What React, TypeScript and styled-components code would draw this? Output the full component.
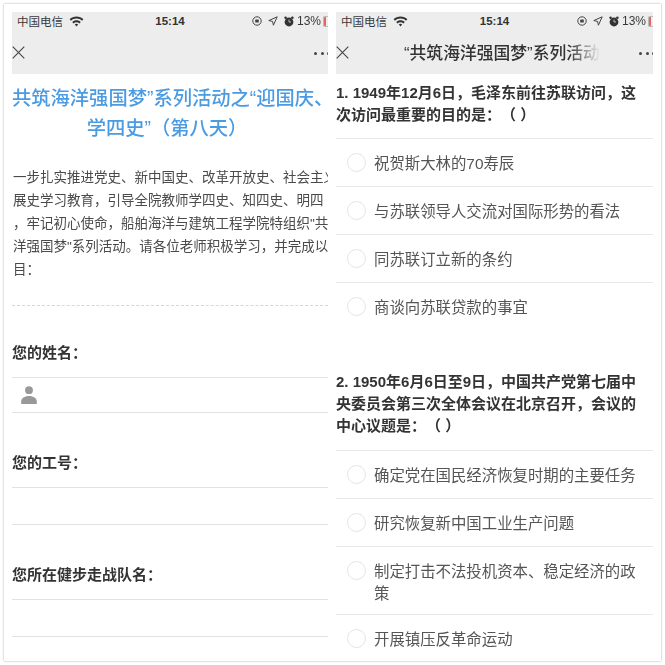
import React from 'react';
import styled, { createGlobalStyle } from 'styled-components';

const GlobalStyle = createGlobalStyle`
  html, body {
    margin: 0;
    padding: 0;
    background: #fff;
  }
  body {
    font-family: "Liberation Sans", "Noto Sans CJK SC", sans-serif;
    color: #333;
    text-spacing-trim: space-all;
  }
`;

const Page = styled.div`
  width: 665px;
  height: 665px;
  padding: 4px;
  box-sizing: border-box;
`;

const Card = styled.div`
  height: 657px;
  box-sizing: border-box;
  padding: 8px;
  display: grid;
  grid-template-columns: 316px 317px;
  gap: 8px;
  background: #fff;
  box-shadow: 0 0 2px rgba(0, 0, 0, 0.35);
  filter: blur(0.45px);
`;

const Phone = styled.div`
  overflow: hidden;
  min-width: 0;
  display: flex;
  flex-direction: column;
`;

const TopBar = styled.div`
  flex: none;
  height: 62px;
  background: #ededed;
  display: flex;
  flex-direction: column;
`;

const StatusRow = styled.div`
  height: 18px;
  display: grid;
  grid-template-columns: 1fr auto 1fr;
  align-items: center;
  font-size: 11.5px;
  color: #3a3a3a;
`;

const Carrier = styled.div`
  display: flex;
  align-items: center;
  gap: 6px;
  padding-left: 5px;
`;

const Clock = styled.div`
  font-weight: 700;
  font-size: 11.5px;
  color: #333;
`;

const StatusRight = styled.div`
  display: flex;
  align-items: center;
  justify-content: flex-end;
  gap: 6px;
`;

const Percent = styled.span`
  font-size: 12px;
  margin-left: -3px;
`;

const BatteryStub = styled.span`
  width: 5px;
  height: 11px;
  margin-left: -4px;
  border-radius: 2px 0 0 2px;
  border: 1px solid #bbb;
  border-right: none;
  box-sizing: border-box;
  background: linear-gradient(90deg, #e4675f 0 50%, transparent 50%);
`;

const NavRow = styled.div`
  height: 44px;
  display: flex;
  align-items: center;
  justify-content: space-between;
  position: relative;
`;

const NavTitle = styled.div`
  position: absolute;
  left: 68px;
  width: 196px;
  overflow: hidden;
  white-space: nowrap;
  font-size: 16.8px;
  font-weight: 500;
  color: #333;
  -webkit-mask-image: linear-gradient(90deg, #000 84%, transparent 100%);
  mask-image: linear-gradient(90deg, #000 84%, transparent 100%);
`;

const Dots = styled.div`
  display: flex;
  gap: 3.5px;
  margin-right: -2px;
  padding-top: 2px;
`;

const Dot = styled.span`
  width: 3px;
  height: 3px;
  border-radius: 50%;
  background: #444;
`;

const Title = styled.h1<{ $shift?: boolean }>`
  margin: 0;
  font-size: 19.3px;
  line-height: 30px;
  font-weight: 500;
  color: #4b9be3;
  white-space: nowrap;
  text-align: ${({ $shift }) => ($shift ? 'center' : 'left')};
  padding-right: ${({ $shift }) => ($shift ? '6px' : '0')};
`;

const TitleBlock = styled.div`
  padding-top: 10px;
`;

const Intro = styled.div`
  margin-top: 22px;
  padding-left: 1px;
  font-size: 13.5px;
  line-height: 23px;
  color: #4a4a4a;
`;

const IntroLine = styled.div`
  white-space: nowrap;
`;

const Divider = styled.div`
  margin-top: 24px;
  border-top: 1px dashed #d6d6d6;
`;

const FieldLabel = styled.div<{ $top: number }>`
  margin-top: ${({ $top }) => $top}px;
  font-size: 15px;
  line-height: 22px;
  font-weight: 700;
  color: #333;
`;

const FieldInput = styled.div<{ $height: number }>`
  margin-top: 13px;
  height: ${({ $height }) => $height}px;
  box-sizing: border-box;
  border-top: 1px solid #e2e2e2;
  border-bottom: 1px solid #e2e2e2;
  padding-left: 9px;
  display: flex;
  align-items: center;
`;

const QuestionText = styled.div<{ $top: number; $bottom: number }>`
  margin-top: ${({ $top }) => $top}px;
  padding: 0 10px ${({ $bottom }) => $bottom}px 0;
  font-size: 15px;
  line-height: 22px;
  font-weight: 700;
  color: #333;
`;

const Options = styled.div`
  border-top: 1px solid #e8e8e8;
`;

const OptionRow = styled.div<{ $wrapped?: boolean }>`
  display: flex;
  align-items: flex-start;
  gap: 8px;
  padding: 14px 15px ${({ $wrapped }) => ($wrapped ? '9px' : '11px')} 11px;
  border-bottom: 1px solid #e8e8e8;
  &:last-child {
    border-bottom: none;
  }
`;

const Radio = styled.span`
  flex: none;
  width: 19px;
  height: 19px;
  margin-top: 0;
  box-sizing: border-box;
  border: 1px solid #e4e4e4;
  border-radius: 50%;
  background: #fff;
`;

const OptionText = styled.div`
  font-size: 15.4px;
  line-height: 22px;
  color: #555;
`;

const WifiIcon = () => (
  <svg width="15" height="11" viewBox="0 0 15 11">
    <path d="M7.5 0.5C4.8 0.5 2.4 1.5 0.6 3.2L2 4.7C3.4 3.3 5.4 2.5 7.5 2.5S11.6 3.3 13 4.7L14.4 3.2C12.6 1.5 10.2 0.5 7.5 0.5Z" fill="#333" />
    <path d="M7.5 4.2C5.8 4.2 4.3 4.9 3.2 5.9L4.6 7.4C5.4 6.7 6.4 6.2 7.5 6.2S9.6 6.7 10.4 7.4L11.8 5.9C10.7 4.9 9.2 4.2 7.5 4.2Z" fill="#333" />
    <path d="M7.5 7.8C6.8 7.8 6.2 8 5.8 8.5L7.5 10.4L9.2 8.5C8.8 8 8.2 7.8 7.5 7.8Z" fill="#333" />
  </svg>
);

const OrientationIcon = () => (
  <svg width="10" height="10" viewBox="0 0 10 10">
    <circle cx="5" cy="5" r="4.2" fill="none" stroke="#444" strokeWidth="1" />
    <rect x="3.2" y="3.6" width="3.6" height="3" rx="0.5" fill="#444" />
  </svg>
);

const ArrowIcon = () => (
  <svg width="10" height="10" viewBox="0 0 10 10">
    <path d="M9.2 0.8L0.8 4.6L4.6 5.4L5.4 9.2Z" fill="none" stroke="#444" strokeWidth="1" strokeLinejoin="round" />
  </svg>
);

const AlarmIcon = () => (
  <svg width="10" height="11" viewBox="0 0 10 11">
    <circle cx="5" cy="6" r="4.4" fill="#333" />
    <circle cx="1.6" cy="1.8" r="1.3" fill="#333" />
    <circle cx="8.4" cy="1.8" r="1.3" fill="#333" />
    <path d="M5 3.6V6H7" stroke="#ddd" strokeWidth="0.8" fill="none" />
  </svg>
);

const CloseIcon = () => (
  <svg width="13" height="13" viewBox="0 0 13 13">
    <path d="M0.7 0.7L12.3 12.3M12.3 0.7L0.7 12.3" stroke="#444" strokeWidth="1.1" fill="none" />
  </svg>
);

const PersonIcon = () => (
  <svg width="16" height="18" viewBox="0 0 16 18">
    <circle cx="8" cy="4.2" r="3.9" fill="#999" />
    <path d="M0.2 18V15.2C0.2 12.4 3.6 10 8 10S15.8 12.4 15.8 15.2V18Z" fill="#999" />
  </svg>
);

const TopBarContent = ({ title }: { title?: string }) => (
  <TopBar>
    <StatusRow>
      <Carrier>
        中国电信
        <WifiIcon />
      </Carrier>
      <Clock>15:14</Clock>
      <StatusRight>
        <OrientationIcon />
        <ArrowIcon />
        <AlarmIcon />
        <Percent>13%</Percent>
        <BatteryStub />
      </StatusRight>
    </StatusRow>
    <NavRow>
      <CloseIcon />
      {title && <NavTitle>{title}</NavTitle>}
      <Dots>
        <Dot />
        <Dot />
        <Dot />
      </Dots>
    </NavRow>
  </TopBar>
);

const introLines = [
  '一步扎实推进党史、新中国史、改革开放史、社会主义',
  '展史学习教育，引导全院教师学四史、知四史、明四',
  '，牢记初心使命，船舶海洋与建筑工程学院特组织"共筑',
  '洋强国梦"系列活动。请各位老师积极学习，并完成以下',
  '目：',
];

const question1 = ['祝贺斯大林的70寿辰', '与苏联领导人交流对国际形势的看法', '同苏联订立新的条约', '商谈向苏联贷款的事宜'];
const question2 = [
  '确定党在国民经济恢复时期的主要任务',
  '研究恢复新中国工业生产问题',
  '制定打击不法投机资本、稳定经济的政策',
  '开展镇压反革命运动',
];

const OptionList = ({ items }: { items: string[] }) => (
  <Options>
    {items.map((item) => (
      <OptionRow key={item} $wrapped={item.length > 17}>
        <Radio />
        <OptionText>{item}</OptionText>
      </OptionRow>
    ))}
  </Options>
);

export default function App() {
  return (
    <Page>
      <GlobalStyle />
      <Card>
        <Phone>
          <TopBarContent />
          <TitleBlock>
            <Title>共筑海洋强国梦”系列活动之“迎国庆、</Title>
            <Title $shift>学四史”（第八天）</Title>
          </TitleBlock>
          <Intro>
            {introLines.map((line) => (
              <IntroLine key={line}>{line}</IntroLine>
            ))}
          </Intro>
          <Divider />
          <FieldLabel $top={36}>您的姓名：</FieldLabel>
          <FieldInput $height={36}>
            <PersonIcon />
          </FieldInput>
          <FieldLabel $top={39}>您的工号：</FieldLabel>
          <FieldInput $height={38} />
          <FieldLabel $top={39}>您所在健步走战队名：</FieldLabel>
          <FieldInput $height={38} />
        </Phone>
        <Phone>
          <TopBarContent title="“共筑海洋强国梦”系列活动之" />
          <QuestionText $top={8} $bottom={12}>
            1. 1949年12月6日，毛泽东前往苏联访问，这次访问最重要的目的是：（ ）
          </QuestionText>
          <OptionList items={question1} />
          <QuestionText $top={41} $bottom={13}>
            2. 1950年6月6日至9日，中国共产党第七届中央委员会第三次全体会议在北京召开，会议的中心议题是：（ ）
          </QuestionText>
          <OptionList items={question2} />
        </Phone>
      </Card>
    </Page>
  );
}
